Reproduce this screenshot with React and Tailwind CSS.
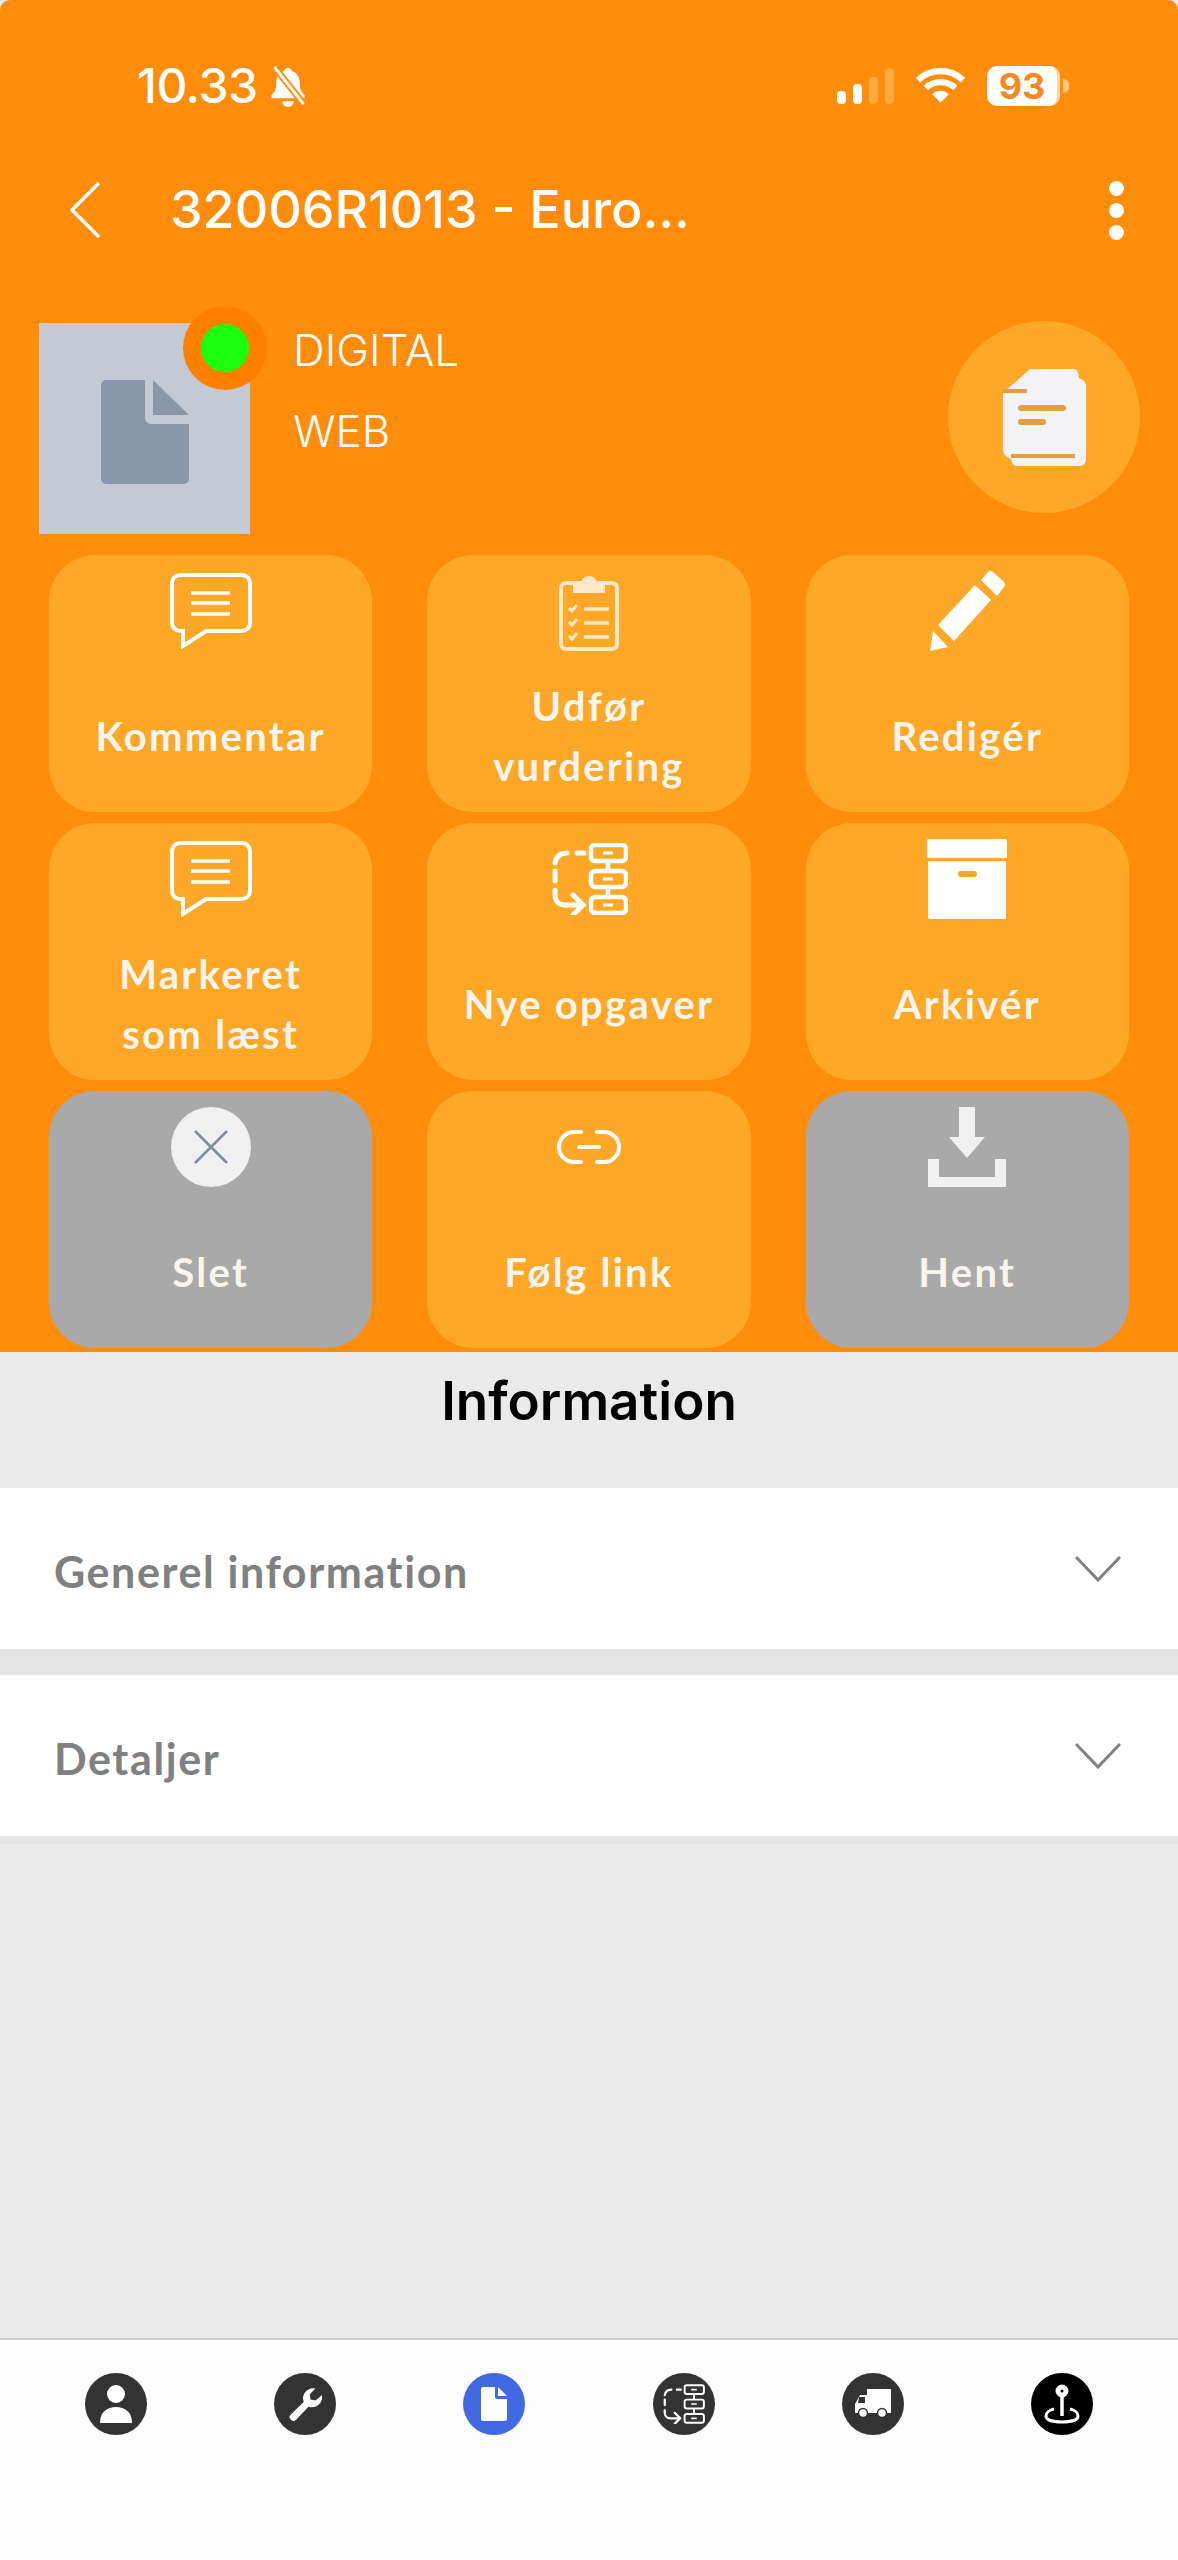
const SANS = "font-['Inter',sans-serif]"

function CommentIcon() {
  return (
    <svg viewBox="0 0 82 76" className="h-[76px] w-[82px]" fill="none" stroke="white" strokeWidth="4">
      <path d="M10 2h62a8 8 0 0 1 8 8v40a8 8 0 0 1-8 8H36L13 73V58h-3a8 8 0 0 1-8-8V10a8 8 0 0 1 8-8Z" />
      <path d="M21 20h39M21 30h39M21 41h39" strokeWidth="3.5" />
    </svg>
  )
}

function ClipboardIcon() {
  return (
    <svg viewBox="0 0 60 80" className="h-[80px] w-[60px] opacity-75 blur-[0.6px]" fill="none" stroke="white" strokeWidth="4">
      <rect x="2" y="12" width="56" height="66" rx="5" />
      <path d="M16 20v-7h8a6 6 0 0 1 12 0h8v7Z" fill="white" />
      <path d="M10 37l3 3 5-6M10 51l3 3 5-6M10 65l3 3 5-6" strokeWidth="3" />
      <path d="M25 38h25M25 52h25M25 66h25" strokeWidth="3.5" />
    </svg>
  )
}

function FlowIcon({ className = 'h-[72px] w-[78px]', sw = 4.5 }) {
  return (
    <svg viewBox="0 0 78 72" className={className} fill="none" stroke="white" strokeWidth={sw}>
      <rect x="41" y="2" width="35" height="16" rx="4" />
      <rect x="41" y="28" width="35" height="16" rx="4" />
      <rect x="41" y="54" width="35" height="16" rx="4" />
      <path d="M58 18v10M58 44v10" />
      <path d="M53 10h10M53 36h10M53 62h10" strokeWidth="3" />
      <path d="M34 10h-7M17 10c-7 0-11 4-12 10M5 28v10M5 47v5c0 6 4 10 10 10h18" strokeLinecap="round" strokeWidth={sw + 0.5} />
      <path d="M23 52l10 10-10 10" strokeLinecap="round" strokeWidth={sw + 0.5} />
    </svg>
  )
}

function PencilIcon() {
  return (
    <svg viewBox="0 0 76 81" className="h-[81px] w-[76px]" fill="white">
      <path d="M52 9l6-7a4 4 0 0 1 6-1l10 9a4 4 0 0 1 1 6l-7 9Z" />
      <path d="M46 14l16 15-37 41-16-16Z" />
      <path d="M4 60l15 16-18 4Z" />
    </svg>
  )
}

function BoxIcon() {
  return (
    <svg viewBox="0 0 80 80" className="h-[80px] w-[80px]" fill="white">
      <rect width="80" height="19" rx="1.5" />
      <path d="M1 22h78v56a2 2 0 0 1-2 2H3a2 2 0 0 1-2-2Z" />
      <rect x="31" y="32" width="19" height="6" rx="3" fill="#FFA726" />
    </svg>
  )
}

function CloseCircleIcon() {
  return (
    <div className="flex h-[80px] w-[80px] items-center justify-center rounded-full bg-[#F0F0F0]">
      <svg viewBox="0 0 36 36" className="h-9 w-9" stroke="#7E8CA0" strokeWidth="2.5">
        <path d="M2 2l32 32M34 2L2 34" />
      </svg>
    </div>
  )
}

function LinkIcon() {
  return (
    <svg viewBox="0 0 66 36" className="h-[36px] w-[66px]" fill="none" stroke="white" strokeWidth="4" strokeLinecap="round">
      <path d="M25 3h-7a15 15 0 0 0 0 30h7M41 3h7a15 15 0 0 1 0 30h-7" />
      <path d="M23 18h20" />
    </svg>
  )
}

function DownloadIcon() {
  return (
    <svg viewBox="0 0 78 80" className="h-[80px] w-[78px]" fill="#F0F0F0">
      <path d="M31 0h16v30h10L39 51 21 30h10Z" />
      <path d="M0 52h11v18h56V52h11v28H0Z" />
    </svg>
  )
}

const ACTIONS = [
  { label: ['Kommentar'], icon: <CommentIcon /> },
  { label: ['Udfør', 'vurdering'], icon: <ClipboardIcon /> },
  { label: ['Redigér'], icon: <PencilIcon /> },
  { label: ['Markeret', 'som læst'], icon: <CommentIcon /> },
  { label: ['Nye opgaver'], icon: <FlowIcon /> },
  { label: ['Arkivér'], icon: <BoxIcon /> },
  { label: ['Slet'], icon: <CloseCircleIcon />, muted: true },
  { label: ['Følg link'], icon: <LinkIcon /> },
  { label: ['Hent'], icon: <DownloadIcon />, muted: true },
]

function ActionCard({ label, icon, muted }) {
  return (
    <div className={`flex h-[257px] flex-col items-center rounded-[46px] pt-4 ${muted ? 'bg-[#A9A9A9]' : 'bg-[#FFA726]'}`}>
      <div className="flex h-[80px] items-center justify-center">{icon}</div>
      <div className="flex flex-1 flex-col justify-center pb-[8px] pt-[16px] text-center font-['Lato',sans-serif] text-[40px] font-bold leading-[60px] tracking-[2.3px] text-[#F8F4EE]">
        {label.map((line) => (
          <div key={line}>{line}</div>
        ))}
      </div>
    </div>
  )
}

function StatusBar() {
  return (
    <div className={`flex h-[62px] items-center justify-between pl-[137px] pr-[109px] ${SANS}`}>
      <div className="flex items-center gap-[10px] text-white">
        <span className="text-[48px] font-medium leading-none tracking-[-0.5px]">10.33</span>
        <svg viewBox="0 0 40 42" className="h-[41px] w-[40px]" fill="white">
          <path d="M20 2a4 4 0 0 1 4 3c6 2 8 7 8 13 0 6 2 9 5 12v3H3v-3c3-3 5-6 5-12 0-6 2-11 8-13a4 4 0 0 1 4-3Z" />
          <path d="M14 36h12a6 6 0 0 1-12 0Z" />
          <path d="M6 1l30 38" stroke="#FF8C0A" strokeWidth="7" />
          <path d="M6 1l30 38" stroke="white" strokeWidth="3" />
        </svg>
      </div>
      <div className="flex items-center gap-[21px]">
        <div className="flex items-end gap-[7px]">
          <div className="h-[13px] w-[9px] rounded-sm bg-white" />
          <div className="h-[20px] w-[9px] rounded-sm bg-white" />
          <div className="h-[27px] w-[9px] rounded-sm bg-[#FFAB40]" />
          <div className="h-[36px] w-[9px] rounded-sm bg-[#FFAB40]" />
        </div>
        <svg viewBox="0 0 52 38" className="h-[38px] w-[51px]" fill="none" stroke="white" strokeWidth="6.5">
          <path d="M3 13a33 33 0 0 1 46 0M11 21a22 22 0 0 1 30 0" />
          <path d="M17.5 27.5a12 12 0 0 1 17 0L26 36Z" fill="white" stroke="none" />
        </svg>
        <div className="flex items-center gap-[3px]">
          <div className="flex h-[40px] w-[73px] items-center justify-center rounded-[10px] border-r-[3px] border-[#FFD59E] bg-white text-[36px] font-bold leading-none text-[#F28A1E]">
            93
          </div>
          <div className="h-[14px] w-[6px] rounded-r-full bg-[#FFCC80]" />
        </div>
      </div>
    </div>
  )
}

function AccordionRow({ title }) {
  return (
    <div className="flex h-[161px] shrink-0 items-center justify-between bg-white pl-[54px] pr-[57px]">
      <span className="pt-[8px] font-['Lato',sans-serif] text-[43px] font-bold tracking-[1.6px] text-[#808080]">{title}</span>
      <svg viewBox="0 0 46 26" className="h-[26px] w-[46px]" fill="none" stroke="#808080" strokeWidth="3">
        <path d="M1 1l22 23L45 1" />
      </svg>
    </div>
  )
}

function NavDot({ color, children }) {
  return (
    <div className={`flex h-[62px] w-[62px] items-center justify-center rounded-full ${color}`}>{children}</div>
  )
}

export default function App() {
  return (
    <div className={`flex h-[2560px] w-full flex-col overflow-hidden bg-[#EAEAEA] ${SANS}`}>
      <section className="h-[1352px] shrink-0 rounded-t-[10px] bg-[#FF8C0A] pt-[55px]">
        <StatusBar />

        <header className="mt-[63px] flex h-[60px] items-center pl-[70px] pr-[54px]">
          <svg viewBox="0 0 30 56" className="h-[56px] w-[30px] shrink-0" fill="none" stroke="white" strokeWidth="3.5">
            <path d="M29 1L2 28l27 27" />
          </svg>
          <h1 className="ml-[70px] flex-1 text-[52px] font-medium leading-none tracking-[0px] text-white">
            32006R1013 - Euro...
          </h1>
          <div className="flex flex-col gap-[7px]">
            <div className="h-[15px] w-[15px] rounded-full bg-white" />
            <div className="h-[15px] w-[15px] rounded-full bg-white" />
            <div className="h-[15px] w-[15px] rounded-full bg-white" />
          </div>
        </header>

        <div className="mt-[83px] flex h-[211px] items-start pl-[39px] pr-[38px]">
          <div className="relative flex h-[211px] w-[211px] shrink-0 items-end justify-center bg-[#C3CAD5] pb-[50px]">
            <svg viewBox="0 0 88 104" className="h-[104px] w-[88px]">
              <path d="M5 0h39v38a6 6 0 0 0 6 6h38v55a5 5 0 0 1-5 5H5a5 5 0 0 1-5-5V5a5 5 0 0 1 5-5Z" fill="#8A97AB" />
              <path d="M52 0l36 35H52Z" fill="#8A97AB" />
            </svg>
            <div className="absolute right-[-17px] top-[-17px] flex h-[84px] w-[84px] items-center justify-center rounded-full bg-[#FF8000]">
              <div className="h-[48px] w-[48px] rounded-full bg-[#1CFF0E]" />
            </div>
          </div>
          <div className="ml-[43px] mt-[-13px] flex-1 text-[44px] font-light leading-[81px] text-white">
            <div>DIGITAL</div>
            <div>WEB</div>
          </div>
          <div className="flex mt-[-2px] h-[192px] w-[192px] shrink-0 items-center justify-center rounded-full bg-[#FFA726]">
            <svg viewBox="0 0 83 97" className="h-[97px] w-[83px]">
              <path d="M27 0h44q3 0 4 4l1 5q6 2 7 7v74q0 7-7 7H14q-5 0-6-7l-4-2q-4-3-4-8V24Z" fill="#F3F3F6" />
              <path d="M0 22h24M8 87h64" stroke="#E3A03A" strokeWidth="4" />
              <path d="M18 39h42M18 53h22" stroke="#E3A03A" strokeWidth="6" strokeLinecap="round" />
            </svg>
          </div>
        </div>

        <div className="mt-[21px] grid grid-cols-3 gap-x-[55px] gap-y-[11px] pl-[49px] pr-[49px]">
          {ACTIONS.map((action) => (
            <ActionCard key={action.label.join(' ')} {...action} />
          ))}
        </div>
      </section>

      <h2 className="h-[136px] shrink-0 pt-[23px] text-center text-[53px] font-semibold leading-none text-black">
        Information
      </h2>
      <AccordionRow title="Generel information" />
      <div className="h-[26px] shrink-0 bg-[#E4E4E4]" />
      <AccordionRow title="Detaljer" />
      <div className="h-[8px] shrink-0 bg-[#E5E5E5]" />

      <div className="flex-1" />

      <nav className="flex h-[222px] shrink-0 justify-between border-t-2 border-[#CCCCCC] bg-[#FDFDFD] pl-[85px] pr-[85px] pt-[33px]">
        <NavDot color="bg-[#333333]">
          <svg viewBox="0 0 32 38" className="h-[38px] w-[32px]" fill="white">
            <circle cx="16" cy="9" r="9" />
            <path d="M0 38c0-11 7-16 16-16s16 5 16 16Z" />
          </svg>
        </NavDot>
        <NavDot color="bg-[#333333]">
          <svg viewBox="0 0 24 24" className="h-[38px] w-[38px]" fill="white">
            <path d="M22.7 6.3a6.5 6.5 0 0 1-8.5 7.4L6.4 22a2.3 2.3 0 0 1-3.3-.1 2.3 2.3 0 0 1-.1-3.3l8.2-7.8a6.5 6.5 0 0 1 7.4-8.6l-3.6 3.7.4 3.3 3.3.6Z" />
          </svg>
        </NavDot>
        <NavDot color="bg-[#4169E1]">
          <svg viewBox="0 0 26 34" className="h-[34px] w-[26px]">
            <path d="M2 0h12v10a2 2 0 0 0 2 2h10v20a2 2 0 0 1-2 2H2a2 2 0 0 1-2-2V2a2 2 0 0 1 2-2Z" fill="white" />
            <path d="M17 0l9 9h-9Z" fill="white" />
          </svg>
        </NavDot>
        <NavDot color="bg-[#333333]">
          <FlowIcon className="h-[40px] w-[43px]" sw={3.5} />
        </NavDot>
        <NavDot color="bg-[#333333]">
          <svg viewBox="0 0 36 30" className="h-[30px] w-[36px]" fill="white">
            <path d="M12 0h24v24H0v-9l5-9h7Z" />
            <path d="M4 8h6v6H3Z" fill="#333333" />
            <circle cx="8" cy="24" r="4.5" stroke="#333333" strokeWidth="1.5" />
            <circle cx="27" cy="24" r="4.5" stroke="#333333" strokeWidth="1.5" />
          </svg>
        </NavDot>
        <NavDot color="bg-black">
          <svg viewBox="0 0 36 40" className="h-[40px] w-[36px]" fill="none" stroke="white" strokeWidth="3">
            <circle cx="18" cy="7" r="5" fill="white" />
            <circle cx="18" cy="7" r="1.5" fill="black" stroke="none" />
            <path d="M18 12v20" strokeWidth="3.5" />
            <path d="M10 25c-5 1-8 4-8 7 0 4 7 6 16 6s16-2 16-6c0-3-3-6-8-7" />
          </svg>
        </NavDot>
      </nav>
    </div>
  )
}
